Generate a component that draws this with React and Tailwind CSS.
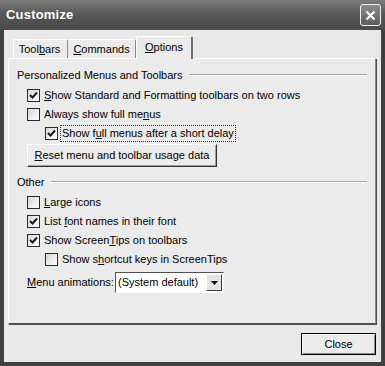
import React from "react";

const font = { fontFamily: '"Liberation Sans", Arial, sans-serif' };

function Check({ checked }) {
  return (
    <span className="w-[13px] h-[13px] shrink-0 border border-[#2a2a2a] bg-gradient-to-br from-[#d8d8d8] to-white flex items-center justify-center">
      {checked && (
        <svg width="9" height="9" viewBox="0 0 9 9">
          <path d="M1 4 L3.5 6.5 L8 1.5" stroke="#1a1a1a" strokeWidth="2" fill="none" />
        </svg>
      )}
    </span>
  );
}

function Row({ checked, indent, focus, children }) {
  return (
    <div className={`h-[19px] flex items-center ${indent ? "pl-[36px]" : "pl-[18px]"}`}>
      <Check checked={checked} />
      <span className={`ml-[2px] px-[1px] leading-[15px] border border-dotted ${focus ? "border-[#333]" : "border-transparent"}`}>
        {children}
      </span>
    </div>
  );
}

function Group({ title }) {
  return (
    <div className="h-[14px] flex items-center pl-[8px] pr-[8px]">
      <span>{title}</span>
      <span className="flex-1 ml-[6px] h-[2px] border-t border-[#a8a8a8] border-b border-b-white" />
    </div>
  );
}

export default function App() {
  return (
    <div style={font} className="w-[385px] h-[366px] bg-[#404040] flex flex-col text-[11px] text-black">
      {/* title bar */}
      <div className="h-[30px] shrink-0 flex items-center justify-between pl-[6px] pr-[4px] bg-gradient-to-b from-[#7c7c7c] via-[#555] to-[#4a4a4a]">
        <span className="text-white font-bold text-[13px] tracking-[0.2px]">Customize</span>
        <div className="w-[21px] h-[22px] rounded-[3px] border border-[#f0f0f0] bg-gradient-to-b from-[#8a8a8a] to-[#5e5e5e] flex items-center justify-center">
          <svg width="11" height="11" viewBox="0 0 11 11">
            <path d="M1.5 1.5 L9.5 9.5 M9.5 1.5 L1.5 9.5" stroke="white" strokeWidth="2.2" />
          </svg>
        </div>
      </div>

      {/* client */}
      <div className="flex-1 mx-[4px] mb-[4px] bg-[#e9e9e9] flex flex-col">
        {/* tabs */}
        <div className="h-[28px] flex items-end pl-[9px]">
          <div className="h-[19px] w-[55px] flex items-center justify-center pr-[2px] border-l border-t border-white border-r border-r-[#8a8a8a] rounded-t-[2px] bg-[#ececec]">
            Tool<u>b</u>ars
          </div>
          <div className="h-[19px] w-[68px] flex items-center justify-center border-t border-white border-r border-r-[#8a8a8a] rounded-t-[2px] bg-[#ececec]">
            <u>C</u>ommands
          </div>
          <div className="h-[23px] w-[57px] -mb-[1px] relative flex items-center justify-center pb-[2px] border-l border-t border-white border-r-2 border-r-[#707070] rounded-t-[2px] bg-[#ebebeb]">
            <u>O</u>ptions
          </div>
        </div>

        {/* panel */}
        <div className="h-[266px] ml-[4px] mr-[5px] border-l border-t border-white border-r border-b border-r-[#8a8a8a] border-b-[#505050] shadow-[1px_1px_0_#505050] bg-[#ebebeb] pt-[9px]">
          <Group title="Personalized Menus and Toolbars" />
          <div className="mt-[4px]">
            <Row checked>
              <u>S</u>how Standard and Formatting toolbars on two rows
            </Row>
            <Row>
              Always show full me<u>n</u>us
            </Row>
            <Row checked indent focus>
              Show f<u>u</u>ll menus after a short delay
            </Row>
          </div>
          <div className="mt-[1px] ml-[18px] w-[190px] h-[23px] border-l border-t border-white border-r border-b border-r-[#303030] border-b-[#303030] shadow-[inset_-1px_-1px_0_#a0a0a0] flex items-center justify-center bg-[#ececec]">
            <span>
              <u>R</u>eset menu and toolbar usage data
            </span>
          </div>

          <div className="mt-[8px]">
            <Group title="Other" />
          </div>
          <div className="mt-[4px]">
            <Row>
              <u>L</u>arge icons
            </Row>
            <Row checked>
              List <u>f</u>ont names in their font
            </Row>
            <Row checked>
              Show Screen<u>T</u>ips on toolbars
            </Row>
            <Row indent>
              Show s<u>h</u>ortcut keys in ScreenTips
            </Row>
          </div>
          <div className="mt-[3px] h-[21px] flex items-center pl-[18px]">
            <span className="w-[88px]">
              <u>M</u>enu animations:
            </span>
            <div className="w-[109px] h-[21px] border-l border-t border-[#505050] border-r border-b border-r-white border-b-white bg-white flex items-center">
              <span className="flex-1 pl-[2px]">(System default)</span>
              <div className="w-[16px] h-[17px] mr-[1px] border-l border-t border-white border-r border-b border-r-[#404040] border-b-[#404040] bg-[#e4e4e4] flex items-center justify-center">
                <svg width="7" height="4" viewBox="0 0 7 4">
                  <path d="M0 0 L7 0 L3.5 4 Z" fill="black" />
                </svg>
              </div>
            </div>
          </div>
        </div>

        {/* footer */}
        <div className="flex justify-end pt-[9px] pr-[5px]">
          <div className="w-[75px] h-[22px] border border-black shadow-[inset_1px_1px_0_white,inset_-1px_-1px_0_#8a8a8a] bg-[#ececec] flex items-center justify-center">
            Close
          </div>
        </div>
      </div>
    </div>
  );
}
